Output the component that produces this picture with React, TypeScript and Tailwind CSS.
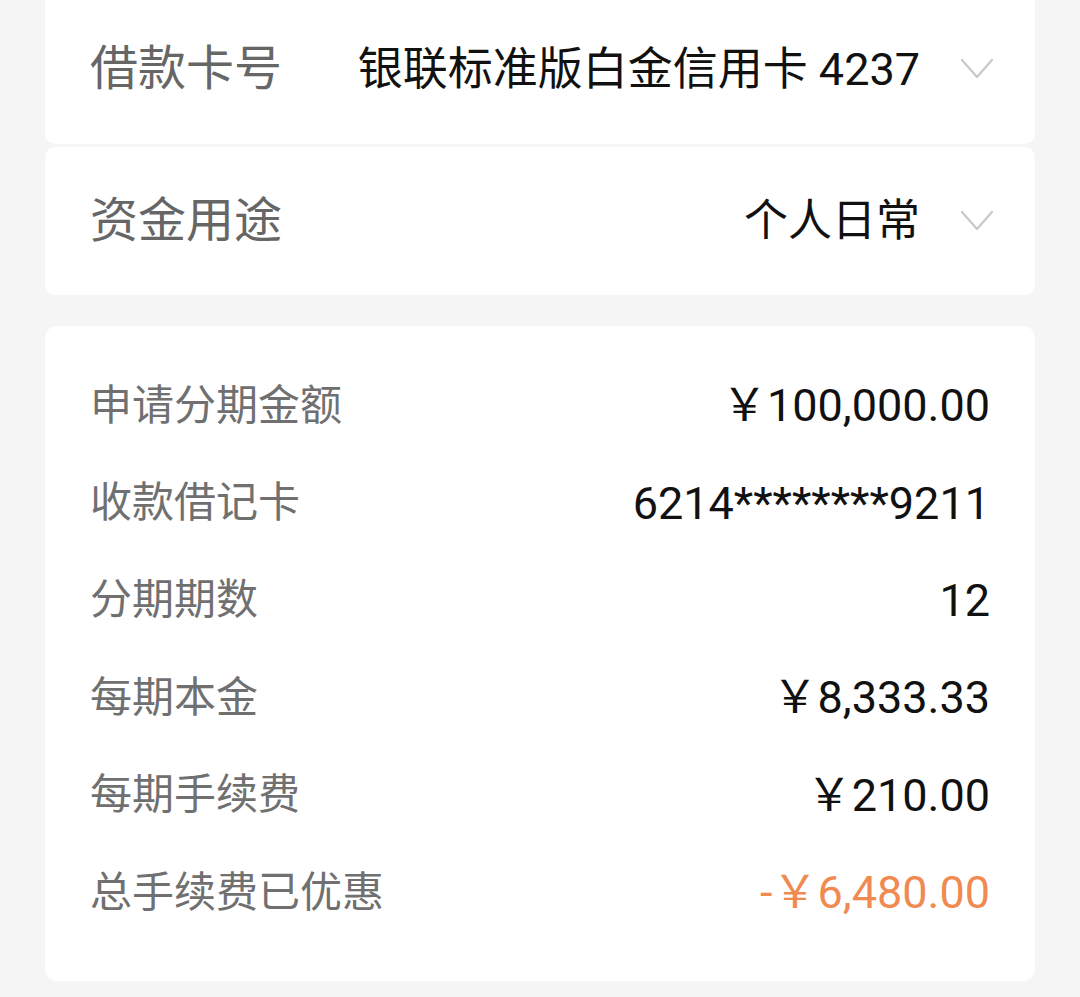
import React from "react";

const font = { fontFamily: 'Roboto, "Noto Sans CJK SC", sans-serif' };

function Chevron() {
  return (
    <svg width="34" height="22" viewBox="0 0 34 22" className="shrink-0 ml-[40px]">
      <polyline points="2,2 17,19 32,2" fill="none" stroke="#c9c9cd" strokeWidth="2.2" strokeLinecap="round" strokeLinejoin="round" />
    </svg>
  );
}

const rows: { label: string; value: string; orange?: boolean }[] = [
  { label: "申请分期金额", value: "￥100,000.00" },
  { label: "收款借记卡", value: "6214********9211" },
  { label: "分期期数", value: "12" },
  { label: "每期本金", value: "￥8,333.33" },
  { label: "每期手续费", value: "￥210.00" },
  { label: "总手续费已优惠", value: "-￥6,480.00", orange: true },
];

export default function App() {
  return (
    <div className="min-h-screen bg-[#f5f5f5] px-[45px] overflow-hidden" style={font}>
      <div className="flex flex-col gap-[3px] mt-[-6px]">
        <div className="h-[150px] bg-white rounded-b-[10px] flex items-center pl-[45px] pr-[41px]">
          <span className="text-[48px] text-[#666666] leading-none">借款卡号</span>
          <span className="flex-1 text-right text-[45px] text-[#111111] leading-none">银联标准版白金信用卡 4237</span>
          <Chevron />
        </div>
        <div className="h-[148px] bg-white rounded-[10px] flex items-center pl-[45px] pr-[41px]">
          <span className="text-[48px] text-[#666666] leading-none">资金用途</span>
          <span className="flex-1 text-right text-[44px] text-[#111111] leading-none">个人日常</span>
          <Chevron />
        </div>
      </div>
      <div className="mt-[31px] bg-white rounded-[12px] px-[45px] pt-[31px] pb-[40px] flex flex-col">
        {rows.map((r) => (
          <div key={r.label} className="h-[97.4px] flex items-center justify-between">
            <span className="text-[42px] text-[#707070] leading-none">{r.label}</span>
            <span className={"text-[45px] leading-none " + (r.orange ? "text-[#f08a50]" : "text-[#111111]")}>{r.value}</span>
          </div>
        ))}
      </div>
    </div>
  );
}
